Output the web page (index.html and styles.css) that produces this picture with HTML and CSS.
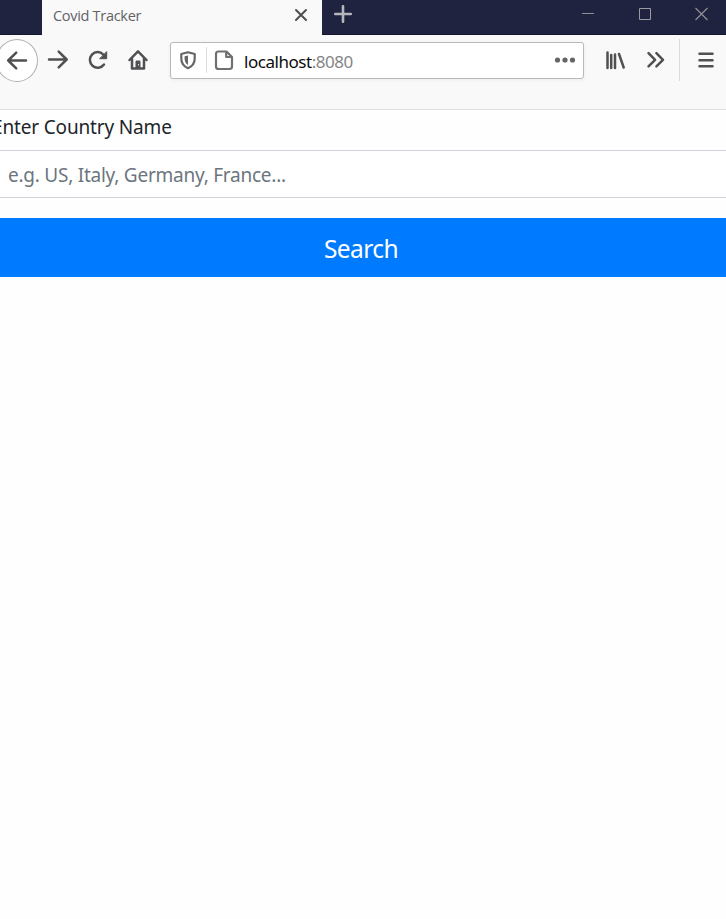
FILE: index.html
```html
<!DOCTYPE html>
<html lang="en">
<head>
<meta charset="utf-8">
<title>Covid Tracker</title>
<link rel="stylesheet" href="styles.css">
</head>
<body>
<header class="tabbar">
  <div class="tab">
    <span class="tab-title">Covid Tracker</span>
    <svg class="tab-close" width="14" height="14" viewBox="0 0 14 14"><path d="M2 2l10 10M12 2L2 12" stroke="#4f4f51" stroke-width="2" stroke-linecap="round"/></svg>
  </div>
  <svg class="new-tab" width="18" height="18" viewBox="0 0 18 18"><path d="M9 1.2v15.6M1.2 9h15.6" stroke="#b5b6bc" stroke-width="2.6" stroke-linecap="round"/></svg>
  <div class="window-controls">
    <svg width="57" height="28" viewBox="0 0 57 28"><path d="M23 13.5h12" stroke="#8f8f96"/></svg>
    <svg width="57" height="28" viewBox="0 0 57 28"><path d="M23.5 8.5h11v11h-11z" fill="none" stroke="#9a9a9f"/></svg>
    <svg width="57" height="28" viewBox="0 0 57 28"><path d="M22.5 8l12 12M34.500 8l-12 12" stroke="#929298" stroke-width="1.1"/></svg>
  </div>
</header>
<nav class="toolbar">
  <div class="back"><svg class="icon" width="40" height="40" viewBox="0 0 40 40"><path d="M29 19.500H11.500M19.200 11.700l-8 7.800 8 7.800" /></svg></div>
  <svg class="icon" width="40" height="40" viewBox="0 0 40 40"><path d="M11 19.500H28.500M20.700 11.700l8 7.800-8 7.800"/></svg>
  <svg class="icon" width="40" height="40" viewBox="0 0 40 40"><path d="M26 24.500A7.800 7.800 0 1 1 25.300 14.500"/><path class="solid" d="M28.700 12v6.700h-6.700z"/></svg>
  <svg class="icon home" width="40" height="40" viewBox="0 0 40 40"><path d="M11.500 20l8.500-8.700 8.500 8.700M14 18.500v10h12v-10"/><path class="door" d="M17.500 28v-6.300q0-1.200 1.200-1.200h2.600q1.200 0 1.200 1.200V28z"/><path class="knob" d="M20 24h1v1.500h-1z"/></svg>
  <div class="urlbar">
    <svg class="shield" width="36" height="36" viewBox="0 0 36 36"><path d="M17 9.300l6.700 1.700v4.800c0 4.500-2.700 7.700-6.700 9.400-4-1.700-6.700-4.900-6.700-9.400V11z" fill="none" stroke="#656567" stroke-width="2.200" stroke-linejoin="round"/><path d="M17 12.500v9.500c-2.400-1.600-3.400-3.700-3.400-6.500v-2.200z" fill="#656567"/></svg>
    <span class="divider"></span>
    <svg class="page" width="36" height="36" viewBox="0 0 36 36"><path d="M11.500 8.500h8l5.500 5.500V23.500q0 2.500-2.500 2.500h-11Q9 26 9 23.500V11Q9 8.500 11.500 8.500zM19.200 8.500v5.500H25" fill="none" stroke="#707072" stroke-width="2.200" stroke-linejoin="round"/></svg>
    <span class="address"><span class="host">localhost</span><span class="port">:8080</span></span>
    <svg class="dots" width="36" height="36" viewBox="0 0 36 36"><g fill="#656567"><circle cx="10.500" cy="17" r="2.600"/><circle cx="18" cy="17" r="2.600"/><circle cx="25.500" cy="17" r="2.600"/></g></svg>
  </div>
  <svg class="icon library" width="40" height="40" viewBox="0 0 40 40"><path d="M12.500 12.500V28M16.200 15V28M20 14.500V28M24 14L28.700 27.500"/></svg>
  <svg class="icon" width="40" height="40" viewBox="0 0 40 40"><path d="M13.500 13.200l6.600 6.700-6.600 6.500M21.400 13.200l6.600 6.700-6.600 6.500"/></svg>
  <span class="toolbar-divider"></span>
  <svg class="icon" width="40" height="40" viewBox="0 0 40 40"><path d="M13.500 13.700h13M13.500 20.200h13M13.500 26.300h13"/></svg>
</nav>
<main class="content">
  <label class="label" for="country">Enter Country Name</label>
  <input class="field" id="country" type="text" placeholder="e.g. US, Italy, Germany, France...">
  <button class="search" type="button">Search</button>
</main>
</body>
</html>
```
FILE: styles.css
```css
* { box-sizing: border-box; }
body {
  margin: 0;
  min-height: 919px;
  overflow: hidden;
  background: #fefefe;
  font-family: "Noto Sans", "Open Sans", sans-serif;
}
svg { display: block; flex: none; }
.tabbar {
  display: flex;
  height: 35px;
  padding-left: 42px;
  background: #202340;
  border-bottom: 1px solid #15172f;
}
.tab {
  display: flex;
  justify-content: space-between;
  width: 280px;
  height: 35px;
  padding: 0 14px 0 11px;
  background: #f9f9fa;
}
.tab-title {
  color: #626264;
  font-family: "Open Sans", "Noto Sans", sans-serif;
  font-size: 14.5px;
  line-height: 31px;
  letter-spacing: -0.3px;
  white-space: nowrap;
}
.tab-close { margin-top: 8px; }
.new-tab { margin: 5px 0 0 12px; }
.window-controls { display: flex; margin-left: auto; margin-right: -4px; }
.toolbar {
  display: flex;
  align-items: flex-start;
  height: 75px;
  padding-top: 4px;
  background: #f9f9fa;
  border-bottom: 1px solid #e0e0e2;
}
.icon {
  margin-top: 1px;
  fill: none;
  stroke: #505053;
  stroke-width: 2.5;
  stroke-linecap: round;
  stroke-linejoin: round;
}
.icon .solid { fill: #505053; stroke-width: 1; }
.icon .door { fill: #505053; stroke: none; }
.icon .knob { fill: #d8d8d9; stroke: none; }
.back {
  flex: none;
  width: 42px;
  height: 43px;
  margin-left: -4px;
  border: 1px solid #b1b1b3;
  border-radius: 50%;
  background: #fff;
}
.urlbar {
  display: flex;
  flex: none;
  width: 414px;
  height: 37px;
  margin: 3px 11px 0 12px;
  border: 1px solid #b9b9bb;
  border-radius: 3px;
  background: #fff;
  box-shadow: 0 1px 4px rgba(0, 0, 0, 0.06);
}
.divider { width: 1px; height: 26px; margin: 4px 0 0 -1px; background: #dededf; }
.address {
  margin-left: 1px;
  font-size: 17px;
  line-height: 37px;
  letter-spacing: -0.46px;
}
.host { color: #0c0c0d; }
.port { color: #858587; }
.dots { margin-left: auto; }
.toolbar-divider { width: 1px; height: 42px; margin: 0 6px 0 4px; background: #dcdcde; }
.content { display: flex; flex-direction: column; }
.label {
  height: 40px;
  margin-left: -8px;
  color: #212529;
  font-size: 19px;
  line-height: 35px;
  letter-spacing: -0.16px;
}
.field {
  height: 48px;
  margin: 0 -10px;
  padding: 2px 17px 0;
  border: 1px solid #ced4da;
  background: #fff;
  font: 19px "Noto Sans", "Open Sans", sans-serif;
  letter-spacing: -0.24px;
}
.field::placeholder { color: #6c757d; opacity: 1; }
.search {
  height: 59px;
  margin: 20px 0 0;
  padding: 2px 4px 0 0;
  border: 0;
  background: #007bff;
  color: #fff;
  font: 24.5px "Noto Sans", "Open Sans", sans-serif;
  letter-spacing: -0.6px;
}
```
